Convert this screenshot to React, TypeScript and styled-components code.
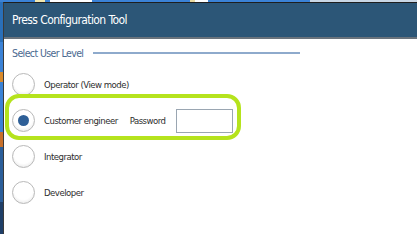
import React from "react";
import styled, { createGlobalStyle } from "styled-components";

const GlobalStyle = createGlobalStyle`
  html, body { margin: 0; padding: 0; background: #fff; }
  body { width: 417px; height: 234px; overflow: hidden; }
`;

const Screen = styled.div`
  display: flex;
  flex-direction: column;
  width: 417px;
  height: 234px;
`;

const TaskStrip = styled.div`
  height: 2px;
  flex: none;
  background: linear-gradient(90deg, #3b82d6 0 35px, #f2e8b0 35px 45px, #3b82d6 45px 50px, #ffffff 50px 92px, #3b82d6 92px 190px, #e8d9a0 190px 195px, #ffffff 195px 208px, #3b82d6 208px 310px, #c9d6e4 310px 417px);
`;

const Body = styled.div`
  flex: 1;
  display: flex;
  min-height: 0;
`;

const DesktopEdge = styled.div`
  width: 3px;
  flex: none;
  background: linear-gradient(180deg, #2a6fb8 0 40px, #3b82d6 40px 70px, #d98a2b 70px 80px, #3b82d6 80px 130px, #c8702a 130px 145px, #2b5e9a 145px 200px, #1f3f68 200px);
`;

const Window = styled.div`
  flex: 1;
  display: flex;
  flex-direction: column;
  border-left: 1px solid #3a3a3a;
  border-top: 1px solid #1e1e1e;
  background: #fff;
`;

const TitleBar = styled.div`
  height: 34px;
  flex: none;
  display: flex;
  align-items: center;
  padding-left: 8px;
  background: #2c5677;
  border-bottom: 2px solid #6a737c;
  color: #fff;
  font-family: "DejaVu Sans Condensed", "Liberation Sans Narrow", "Liberation Sans", sans-serif;
  font-size: 12px;
  letter-spacing: -0.6px;
`;

const Content = styled.div`
  display: flex;
  flex-direction: column;
  padding: 6px 0 0 8px;
  font-family: "DejaVu Sans Condensed", "Liberation Sans Narrow", "Liberation Sans", sans-serif;
`;

const GroupHeader = styled.div`
  display: flex;
  align-items: center;
  gap: 10px;
  height: 16px;
  color: #4a6990;
  font-size: 10.5px;
  letter-spacing: -0.6px;
`;

const HeaderRule = styled.div`
  width: 207px;
  height: 2px;
  background: #8eaacc;
`;

const OptionList = styled.div`
  display: flex;
  flex-direction: column;
  gap: 13px;
  margin-top: 12px;
`;

const Row = styled.div<{ $highlighted?: boolean }>`
  position: relative;
  display: flex;
  align-items: center;
  height: 23px;
  font-size: 9.5px;
  letter-spacing: -0.5px;
  color: #2e2e2e;

  ${(p) =>
    p.$highlighted &&
    `
    &::after {
      content: "";
      position: absolute;
      left: -7px;
      top: -15px;
      width: 228px;
      height: 38px;
      border: 4px solid #b5e31d;
      border-radius: 14px;
      pointer-events: none;
    }
  `}
`;

const Radio = styled.span<{ $checked?: boolean }>`
  width: 21px;
  height: 21px;
  flex: none;
  border-radius: 50%;
  border: 1px solid #b9b9b9;
  background: radial-gradient(circle at 50% 40%, #ffffff 0 55%, #ececec 80%, #dcdcdc 100%);
  display: flex;
  align-items: center;
  justify-content: center;

  &::before {
    content: "";
    width: 11px;
    height: 11px;
    border-radius: 50%;
    background: #2e5f97;
    display: ${(p) => (p.$checked ? "block" : "none")};
  }
`;

const Label = styled.span`
  margin-left: 9px;
`;

const PasswordLabel = styled.span`
  margin-left: 12px;
`;

const PasswordInput = styled.div`
  width: 55px;
  height: 22px;
  margin-left: 10px;
  border: 1px solid #9aa6b2;
  background: #fff;
`;

const options = [
  { label: "Operator (View mode)" },
  { label: "Customer engineer", checked: true, password: true },
  { label: "Integrator" },
  { label: "Developer" },
];

export default function App() {
  return (
    <Screen>
      <GlobalStyle />
      <TaskStrip />
      <Body>
        <DesktopEdge />
        <Window>
          <TitleBar>Press Configuration Tool</TitleBar>
          <Content>
            <GroupHeader>
              Select User Level
              <HeaderRule />
            </GroupHeader>
            <OptionList>
              {options.map((o) => (
                <Row key={o.label} $highlighted={o.password}>
                  <Radio $checked={o.checked} />
                  <Label>{o.label}</Label>
                  {o.password && (
                    <>
                      <PasswordLabel>Password</PasswordLabel>
                      <PasswordInput />
                    </>
                  )}
                </Row>
              ))}
            </OptionList>
          </Content>
        </Window>
      </Body>
    </Screen>
  );
}
